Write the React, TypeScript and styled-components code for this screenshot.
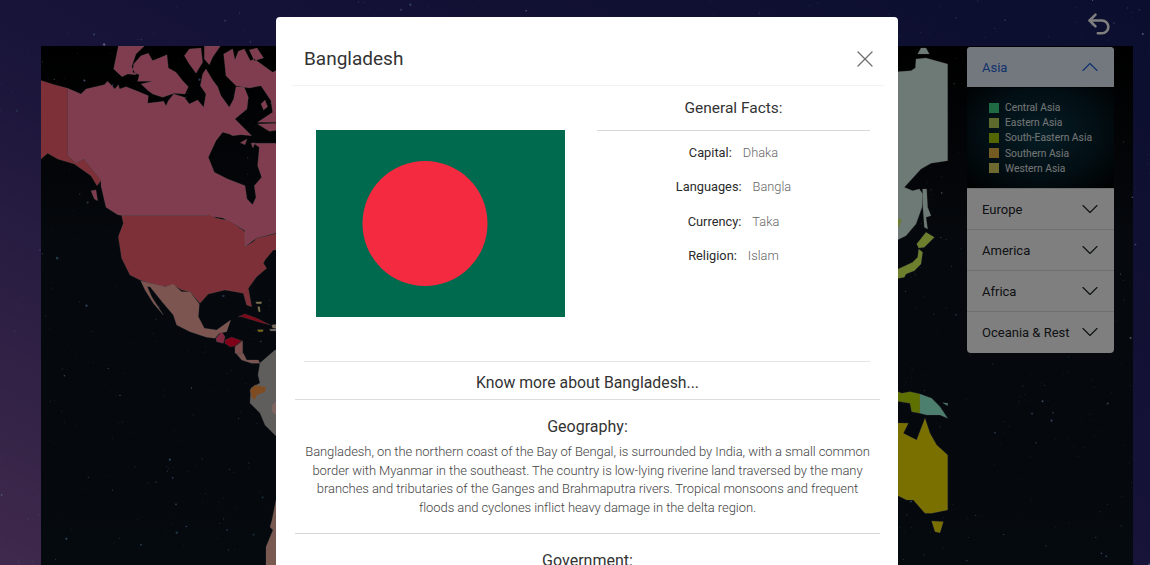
import styled, { createGlobalStyle } from 'styled-components';
import { ChevronDown, ChevronUp, Undo2, X } from 'lucide-react';

const fontStack = `Roboto, "Open Sans", sans-serif`;

const GlobalStyle = createGlobalStyle`
  html, body {
    margin: 0;
    height: 100%;
    overflow: hidden;
    font-family: ${fontStack};
  }
`;

// simple seeded generator so the sky is the same on each load
const makeStars = (count: number, seed: number, size: number) => {
  let s = seed;
  const next = () => {
    s = (s * 16807) % 2147483647;
    return s / 2147483647;
  };
  const tints = ['#9fc0ff', '#7fa8ff', '#6f9ff0', '#c8d4ff', '#6cb8e8'];
  return Array.from({ length: count }, () => ({
    x: next() * 1150,
    y: next() * 565,
    r: 0.3 + next() * next() * next() * size,
    o: 0.3 + next() * 0.6,
    c: tints[Math.floor(next() * tints.length)],
  }));
};

const skyStars = makeStars(1400, 4711, 1.2);
const mapStars = makeStars(1500, 90210, 1.4);

const Stars = ({ items }: { items: ReturnType<typeof makeStars> }) => (
  <StarSvg viewBox="0 0 1150 565">
    {items.map((star, i) => (
      <circle key={i} cx={star.x} cy={star.y} r={star.r} fill={star.c} opacity={star.o} />
    ))}
  </StarSvg>
);

const WorldMap = () => (
  <MapSvg viewBox="41 46 1092 519">
    {/* north america, traced at 3x from the top left */}
    <g transform="translate(41 44) scale(0.3333)">
      <Land
        fill="#ff7a9e"
        fillRule="evenodd"
        d="M80,133 L120,150 L135,135 L190,122 L200,112 L222,135 L232,122 L236,135 L255,128 L290,142 L322,155 L320,178 L368,172 L375,186 L382,170 L398,150 L430,160 L445,180 L470,168 L488,190 L495,150 L478,125 L485,90 L495,75 L515,108 L530,128 L540,155 L565,190 L578,165 L585,128 L610,130 L622,160 L618,195 L582,225 L632,275 L600,272 L575,275 L565,270 L545,265 L525,290 L502,340 L520,385 L560,405 L612,425 L618,465 L635,482 L645,460 L640,425 L662,400 L650,365 L655,310 L638,298 L715,298 L715,565 L647,582 L612,608 L612,560 L580,540 L545,522 L498,515 L247,515 L230,512 L195,490 L180,425 L180,410 L128,345 L105,358 L80,335 Z
        M218,75 L232,6 L310,6 L285,30 L272,68 L285,92 L260,90 L243,98 Z
        M300,35 L322,28 L335,50 L360,40 L378,32 L382,72 L405,85 L425,110 L442,128 L432,150 L400,148 L365,160 L335,150 L322,140 L300,120 L335,112 L290,112 L295,92 L275,85 L278,60 Z
        M445,15 L480,12 L485,55 L465,88 L445,60 L430,35 Z
        M490,6 L538,6 L515,40 L505,62 L490,45 Z
        M548,30 L575,15 L582,48 L592,22 L610,15 L628,50 L640,45 L695,85 L715,75 L715,235 L650,235 L695,205 L690,170 L660,125 L625,132 L585,125 L555,95 Z
        M625,18 L648,12 L668,42 L640,50 Z
        M650,240 L715,238 L715,258 L685,262 Z
        M660,180 L672,168 L680,188 L668,198 Z
        M598,296 L618,285 L612,302 Z
        M630,298 L642,296 L636,312 Z
        M150,440 L165,438 L170,470 L160,465 Z"
      />
      <Land
        fill="#fa6070"
        d="M-5,108 L40,122 L80,133 L80,335 L105,358 L128,345 L180,410 L168,425 L150,395 L100,360 L50,345 L20,328 L0,345 L-5,345 Z"
      />
    </g>
    <g transform="translate(110 190) scale(0.3333)">
      <Land
        fill="#fa6070"
        d="M35,77 L290,77 L295,72 L320,85 L360,92 L405,125 L405,170 L430,155 L440,145 L505,130 L505,180 L490,180 L465,210 L460,220 L470,235 L440,260 L415,295 L425,350 L410,345 L400,310 L375,305 L345,300 L295,312 L270,340 L240,305 L215,300 L190,285 L160,290 L120,280 L90,270 L60,255 L35,205 L25,140 L40,100 Z"
      />
      <Land
        fill="#faaaa0"
        d="M92,272 L120,280 L165,290 L190,283 L215,305 L240,305 L268,342 L265,380 L283,415 L320,420 L362,390 L350,425 L328,430 L315,445 L290,442 L240,425 L200,405 L190,375 L160,340 L120,290 L112,290 L125,320 L160,375 L130,340 L105,300 Z"
      />
      <Land fill="#ff5080" d="M318,445 L335,425 L345,440 L340,460 L320,455 Z" />
      <Land fill="#ff0030" d="M345,450 L365,442 L395,452 L375,468 L360,470 L345,460 Z" />
      <Land fill="#fa9a9a" d="M375,470 L398,452 L398,490 L375,490 Z" />
      <Land fill="#f0a8a0" d="M378,490 L400,490 L410,510 L445,510 L450,520 L425,520 L395,510 Z" />
      <Land fill="#ff1030" d="M385,380 L405,372 L440,385 L480,405 L455,398 L420,388 L395,380 Z" />
      <Land fill="#f0d8b0" d="M485,405 L500,403 L500,415 L488,414 Z" />
      <Land fill="#d8d0c0" d="M478,418 L500,416 L500,423 L482,423 Z" />
      <Land fill="#ffd020" d="M442,419 L460,419 L458,425 L445,425 Z" />
      <Land fill="#ffe890" d="M437,336 L455,335 L454,341 L440,341 Z M443,350 L449,350 L451,365 L446,365 Z" />
    </g>
    {/* south america, page coordinates */}
    <Land fill="#c0baba" d="M260,363 L275,350 L280,350 L280,440 L265,425 L260,413 L250,403 L251,388 L260,383 L258,375 Z" />
    <Land fill="#ffc8c0" d="M272,405 L280,398 L280,418 L272,412 Z" />
    <Land fill="#ff9640" d="M250,390 L255,385 L266,387 L265,392 L257,395 L255,400 L252,398 Z" />
    <Land fill="#f4b4a0" d="M276,500 L272,520 L270,527 L273,530 L266,547 L266,570 L280,570 Z" />
    {/* asia */}
    <g transform="translate(896 44) scale(0.3333)">
      <Land
        fill="#dcf4ec"
        d="M-20,85 L45,80 L58,72 L60,45 L90,42 L155,60 L155,350 L105,358 L75,375 L25,430 L50,440 L70,435 L80,450 L78,490 L60,540 L30,575 L-20,600 Z"
      />
      <Land fill="#dcf4ec" d="M65,30 L75,12 L90,12 L100,30 Z" />
      <Land fill="#dcf4ec" d="M80,435 L92,435 L95,490 L105,515 L90,520 L95,555 L85,550 L80,480 Z" />
      <Land fill="#daff58" d="M90,565 L115,580 L100,595 L85,610 L68,612 L62,600 Z" />
      <Land fill="#daff58" d="M68,615 L80,625 L75,660 L55,680 L30,690 L25,700 L-5,705 L-5,680 L28,665 L50,655 L65,640 Z" />
      <Land fill="#daff58" d="M-5,525 L18,525 L8,550 L-5,555 Z" />
    </g>
    {/* oceania */}
    <g transform="translate(890 350) scale(0.3333)">
      <Land
        fill="#f4e000"
        d="M0,218 L55,220 L40,250 L80,270 L105,205 L120,250 L140,285 L173,315 L173,480 L125,490 L105,490 L70,450 L50,450 L0,425 Z"
      />
      <Land fill="#f4e000" d="M125,513 L160,515 L150,548 L135,545 Z" />
      <Land fill="#bce000" d="M0,115 L35,130 L60,125 L90,132 L90,190 L65,185 L60,160 L0,150 Z" />
      <Land fill="#9affdc" d="M90,132 L125,145 L150,170 L173,205 L150,195 L110,195 L90,190 Z" />
      <Land fill="#9affdc" d="M158,158 L173,160 L173,167 Z" />
    </g>
  </MapSvg>
);

const legend = [
  { name: 'Central Asia', color: '#46e890' },
  { name: 'Eastern Asia', color: '#d0e860' },
  { name: 'South-Eastern Asia', color: '#b8e000' },
  { name: 'Southern Asia', color: '#ffc848' },
  { name: 'Western Asia', color: '#f4e868' },
];

const regions = ['Europe', 'America', 'Africa', 'Oceania & Rest'];

const facts = [
  { label: 'Capital:', value: 'Dhaka' },
  { label: 'Languages:', value: 'Bangla' },
  { label: 'Currency:', value: 'Taka' },
  { label: 'Religion:', value: 'Islam' },
];

export default function App() {
  return (
    <Page>
      <GlobalStyle />
      <Stars items={skyStars} />
      <TopBar>
        <BackButton type="button">
          <Undo2 size={28} strokeWidth={2.2} />
        </BackButton>
      </TopBar>
      <MapPanel>
        <Stars items={mapStars} />
        <WorldMap />
        <Accordion>
          <ActiveHeader>
            Asia
            <ChevronUp size={28} strokeWidth={1} />
          </ActiveHeader>
          <LegendBody>
            {legend.map((item) => (
              <LegendRow key={item.name}>
                <Swatch $color={item.color} />
                {item.name}
              </LegendRow>
            ))}
          </LegendBody>
          {regions.map((region) => (
            <RegionHeader key={region}>
              {region}
              <ChevronDown size={28} strokeWidth={1} />
            </RegionHeader>
          ))}
        </Accordion>
      </MapPanel>

      <Backdrop>
        <Modal>
          <ModalHeader>
            <ModalTitle>Bangladesh</ModalTitle>
            <CloseButton type="button">
              <X size={28} strokeWidth={1.1} />
            </CloseButton>
          </ModalHeader>
          <ModalBody>
            <TopRow>
              <FlagColumn>
                <svg width="249" height="187" viewBox="0 0 249 187">
                  <rect width="249" height="187" fill="#006a4e" />
                  <circle cx="109" cy="93.5" r="62.5" fill="#f42a41" />
                </svg>
              </FlagColumn>
              <FactsColumn>
                <FactsTitle>General Facts:</FactsTitle>
                <FactsList>
                  {facts.map((fact) => (
                    <FactRow key={fact.label}>
                      <FactLabel>{fact.label}</FactLabel>
                      <FactValue>{fact.value}</FactValue>
                    </FactRow>
                  ))}
                </FactsList>
              </FactsColumn>
            </TopRow>
            <MoreTitle>Know more about Bangladesh...</MoreTitle>
            <Section>
              <SectionTitle>Geography:</SectionTitle>
              <SectionText>
                Bangladesh, on the northern coast of the Bay of Bengal, is surrounded by India, with a small common
                border with Myanmar in the southeast. The country is low-lying riverine land traversed by the many
                branches and tributaries of the Ganges and Brahmaputra rivers. Tropical monsoons and frequent
                floods and cyclones inflict heavy damage in the delta region.
              </SectionText>
            </Section>
            <Section>
              <SectionTitle>Government:</SectionTitle>
            </Section>
          </ModalBody>
        </Modal>
      </Backdrop>
    </Page>
  );
}

const Page = styled.div`
  position: relative;
  display: flex;
  flex-direction: column;
  height: 100vh;
  overflow: hidden;
  background: linear-gradient(to top right, #80549a 0%, #2e2672 50%, #161d5c 100%);
`;

const StarSvg = styled.svg`
  position: absolute;
  inset: 0;
  width: 1150px;
  height: 565px;
  pointer-events: none;
`;

const TopBar = styled.div`
  position: relative;
  display: flex;
  justify-content: flex-end;
  align-items: center;
  height: 46px;
  padding: 2px 37px 0 0;
  box-sizing: border-box;
`;

const BackButton = styled.button`
  display: flex;
  padding: 0;
  border: 0;
  background: none;
  color: #ffffff;
  cursor: pointer;
`;

const MapPanel = styled.div`
  position: relative;
  flex: 1;
  margin: 0 17px 0 41px;
  overflow: hidden;
  background: linear-gradient(to bottom, #000000 0%, #0a1018 35%, #0a141c 100%);
`;

const MapSvg = styled.svg`
  position: absolute;
  inset: 0;
  width: 100%;
  height: 100%;
`;

const Land = styled.path`
  stroke: rgba(200, 200, 200, 0.45);
  stroke-width: 0.5px;
  stroke-linejoin: round;
  vector-effect: non-scaling-stroke;
`;

const Accordion = styled.div`
  position: absolute;
  top: 1px;
  right: 19px;
  width: 147px;
  padding-bottom: 1px;
  overflow: hidden;
  border-radius: 4px;
  background: #ffffff;
  color: #212529;
  font-size: 13px;
`;

const RegionHeader = styled.div`
  display: flex;
  align-items: center;
  justify-content: space-between;
  box-sizing: border-box;
  height: 41px;
  padding: 0 10px 0 15px;
  border-top: 1px solid rgba(0, 0, 0, 0.125);
`;

const ActiveHeader = styled(RegionHeader)`
  border-top: 0;
  height: 40px;
  background: #e7f1ff;
  color: #1f62d8;
`;

const LegendBody = styled.div`
  box-sizing: border-box;
  height: 101px;
  padding: 12px 0 0 22px;
  border-top: 1px solid rgba(0, 0, 0, 0.3);
  background: radial-gradient(ellipse at 50% 45%, #0a3a4a 0%, #051e28 55%, #000000 100%);
  color: #ffffff;
  font-size: 10.3px;
`;

const LegendRow = styled.div`
  display: flex;
  align-items: center;
  gap: 6px;
  height: 15.2px;
  opacity: 0.9;
`;

const Swatch = styled.span<{ $color: string }>`
  width: 10px;
  height: 10px;
  background: ${(p) => p.$color};
`;

const Backdrop = styled.div`
  position: fixed;
  inset: 0;
  display: flex;
  align-items: flex-start;
  background: rgba(0, 0, 0, 0.5);
`;

const Modal = styled.div`
  flex: none;
  width: 622px;
  margin: 17px 0 0 276px;
  border-radius: 4px 4px 0 0;
  background: #ffffff;
  color: #333333;
`;

const ModalHeader = styled.div`
  display: flex;
  align-items: center;
  justify-content: space-between;
  box-sizing: border-box;
  height: 69px;
  margin: 0 14px 0 16px;
  padding: 15px 5px 0 12px;
  border-bottom: 1px solid #f2f2f2;
`;

const ModalTitle = styled.h5`
  margin: 0;
  font-size: 19px;
  font-weight: 400;
`;

const CloseButton = styled.button`
  display: flex;
  padding: 0;
  border: 0;
  background: none;
  color: #6f6f6f;
  cursor: pointer;
`;

const ModalBody = styled.div`
  padding: 0 18px 0 19px;
`;

const TopRow = styled.div`
  display: flex;
  height: 275px;
  margin: 0 10px 0 9px;
  border-bottom: 1px solid #e4e4e4;
`;

const FlagColumn = styled.div`
  width: 293px;
  padding: 44px 0 0 12px;
  box-sizing: border-box;
`;

const FactsColumn = styled.div`
  flex: 1;
`;

const FactsTitle = styled.div`
  display: flex;
  align-items: center;
  justify-content: center;
  height: 44px;
  border-bottom: 1px solid #d8d8d8;
  font-size: 15.5px;
`;

const FactsList = styled.div`
  padding-top: 4.5px;
`;

const FactRow = styled.div`
  display: flex;
  align-items: center;
  justify-content: center;
  gap: 11px;
  height: 34.3px;
  font-size: 12.8px;
`;

const FactLabel = styled.span`
  color: #2b2b2b;
`;

const FactValue = styled.span`
  color: #666666;
  font-weight: 300;
`;

const MoreTitle = styled.div`
  box-sizing: border-box;
  height: 38px;
  padding-top: 10px;
  border-bottom: 1px solid #dddddd;
  text-align: center;
  font-size: 15.8px;
  line-height: 22px;
`;

const Section = styled.div`
  padding-bottom: 15px;
  border-bottom: 1px solid #d8d8d8;
`;

const SectionTitle = styled.div`
  margin-top: 16px;
  margin-bottom: 5px;
  text-align: center;
  font-size: 16px;
  line-height: 22px;
`;

const SectionText = styled.p`
  margin: 0;
  padding: 0 8px;
  color: #444444;
  text-align: center;
  font-size: 13px;
  font-weight: 300;
  letter-spacing: -0.07px;
  line-height: 18.7px;
`;
